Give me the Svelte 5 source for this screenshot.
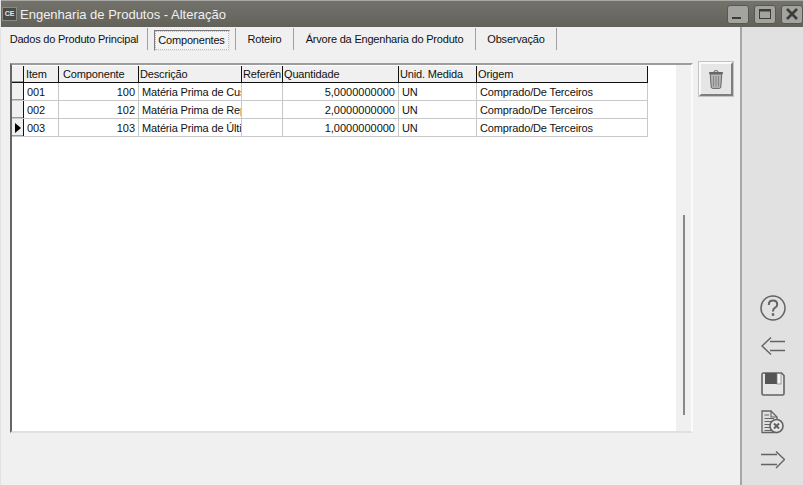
<script lang="ts">
  const tabs = [
    { label: 'Dados do Produto Principal', width: 147 },
    { label: 'Componentes', width: 88, active: true },
    { label: 'Roteiro', width: 58 },
    { label: 'Árvore da Engenharia do Produto', width: 182 },
    { label: 'Observação', width: 81 }
  ];

  const columns = [
    { title: 'Item', width: 35 },
    { title: 'Componente', width: 80, numeric: true },
    { title: 'Descrição', width: 103 },
    { title: 'Referên', width: 41 },
    { title: 'Quantidade', width: 116, numeric: true },
    { title: 'Unid. Medida', width: 78 },
    { title: 'Origem', width: 171 }
  ];

  const rows = [
    ['001', '100', 'Matéria Prima de Custo', '', '5,0000000000', 'UN', 'Comprado/De Terceiros'],
    ['002', '102', 'Matéria Prima de Reposição', '', '2,0000000000', 'UN', 'Comprado/De Terceiros'],
    ['003', '103', 'Matéria Prima de Última', '', '1,0000000000', 'UN', 'Comprado/De Terceiros']
  ];
</script>

<div class="window">
  <header class="titlebar">
    <span class="app-icon">CE</span>
    <span class="title">Engenharia de Produtos - Alteração</span>
    <div class="win-buttons">
      <button class="win-btn" aria-label="Minimizar">
        <svg width="14" height="12" viewBox="0 0 14 12"><rect x="1" y="9" width="9" height="2" fill="#3c3c38" /></svg>
      </button>
      <button class="win-btn" aria-label="Maximizar">
        <svg width="14" height="12" viewBox="0 0 14 12"><rect x="1.5" y="1.5" width="11" height="9" fill="none" stroke="#3c3c38" stroke-width="1" /><rect x="1" y="1" width="12" height="2.5" fill="#3c3c38" /></svg>
      </button>
      <button class="win-btn" aria-label="Fechar">
        <svg width="14" height="12" viewBox="0 0 14 12"><path d="M2 1 L12 11 M12 1 L2 11" stroke="#3c3c38" stroke-width="2.6" /></svg>
      </button>
    </div>
  </header>

  <div class="body">
    <main class="main">
      <nav class="tabs">
        {#each tabs as tab}
          <div class="tab" class:active={tab.active} style="width: {tab.width}px">
            <span class="tab-label">{tab.label}</span>
          </div>
        {/each}
      </nav>

      <div class="content">
        <div class="grid-frame">
          <div class="grid-area">
            <div class="grid">
              <div class="row head">
                <div class="indicator"></div>
                {#each columns as col}
                  <div class="cell" style="width: {col.width}px">{col.title}</div>
                {/each}
              </div>
              {#each rows as row, r}
                <div class="row">
                  <div class="indicator">
                    {#if r === rows.length - 1}<span class="pointer"></span>{/if}
                  </div>
                  {#each row as value, c}
                    <div class="cell" class:num={columns[c].numeric} style="width: {columns[c].width}px">{value}</div>
                  {/each}
                </div>
              {/each}
            </div>
          </div>
          <div class="scroll-track"><div class="scroll-thumb"></div></div>
        </div>

        <button class="trash" aria-label="Excluir">
          <svg width="14" height="19" viewBox="0 0 14 19" fill="none">
            <path d="M5 2 Q5 0.7 6 0.7 H8 Q9 0.7 9 2" stroke="#666" stroke-width="1" />
            <rect x="0" y="2" width="14" height="2" rx="0.7" fill="#666" />
            <path d="M1.2 4 L2.2 17 Q2.4 18.4 3.5 18.4 H10.5 Q11.6 18.4 11.8 17 L12.8 4 Z" fill="#b4b4b4" stroke="#666" stroke-width="1" />
            <path d="M4.5 6 V16.5 M7 6 V16.5 M9.5 6 V16.5" stroke="#858585" stroke-width="1" />
          </svg>
        </button>
      </div>
    </main>

    <aside class="sidebar">
      <div class="slot">
        <svg width="26" height="26" viewBox="0 0 26 26" fill="none" stroke="#636363">
          <circle cx="13" cy="13" r="12" stroke-width="1.5" />
          <path d="M8.8 10 Q8.8 5.6 13 5.6 Q17.2 5.6 17.2 9.4 Q17.2 11.6 14.8 12.8 Q13 13.8 13 16.4" stroke-width="2" />
          <rect x="11.8" y="18.2" width="2.4" height="2.6" fill="#636363" stroke="none" />
        </svg>
      </div>
      <div class="slot">
        <svg width="24" height="18" viewBox="0 0 24 18" fill="none" stroke="#636363" stroke-width="1.4">
          <path d="M10 0.5 L1 9 L10 17.5 M9 4.5 H24 M9 13.5 H24" />
        </svg>
      </div>
      <div class="slot">
        <svg width="24" height="24" viewBox="0 0 24 24" fill="none">
          <path d="M1 2.5 Q1 1 2.5 1 H20.5 L23 3.5 V21.5 Q23 23 21.5 23 H2.5 Q1 23 1 21.5 Z" fill="#e6e6e6" stroke="#636363" stroke-width="1.6" />
          <rect x="4" y="1" width="12" height="11" fill="#555" />
          <rect x="16" y="1.5" width="4" height="10.5" fill="#f6f6f6" stroke="#777" stroke-width="0.7" />
        </svg>
      </div>
      <div class="slot">
        <svg width="23" height="24" viewBox="0 0 23 24" fill="none" stroke="#636363">
          <path d="M1 1 H10 L16 7 V22.5 H1 Z" stroke-width="1.3" fill="#dedede" />
          <path d="M10 1 V7 H16" stroke-width="1.1" />
          <path d="M3.5 5 H8 M3.5 8.5 H13 M3.5 11.5 H11 M3.5 14.5 H9 M3.5 17.5 H9 M3.5 20.5 H12" stroke-width="1.2" />
          <circle cx="15.5" cy="16" r="6.5" fill="#e8e8e8" stroke-width="1.6" />
          <path d="M13 13.5 L18 18.5 M18 13.5 L13 18.5" stroke-width="2" />
        </svg>
      </div>
      <div class="slot">
        <svg width="24" height="18" viewBox="0 0 24 18" fill="none" stroke="#636363" stroke-width="1.4">
          <path d="M15 0.5 L23.5 8.5 L15 17 M0 3.5 H16 M0 13.5 H16" />
        </svg>
      </div>
    </aside>
  </div>
</div>

<style>
  :global(body) {
    margin: 0;
    background: #f0f0f0;
    font-family: "Liberation Sans", sans-serif;
  }

  .window {
    width: 803px;
    height: 485px;
    display: flex;
    flex-direction: column;
    overflow: hidden;
    box-sizing: border-box;
    border-left: 1px solid #e2e2e2;
  }

  .titlebar {
    height: 27px;
    flex: none;
    display: flex;
    align-items: center;
    box-sizing: border-box;
    border-top: 1px solid #a8a8a4;
    background: linear-gradient(#73736b, #62625b);
    margin-left: -1px;
  }

  .app-icon {
    width: 13px;
    height: 12px;
    margin-left: 2px;
    background: #4a4a46;
    border: 1px solid #8a8a84;
    color: #e4e4e4;
    font: bold 7px/12px "Liberation Sans", sans-serif;
    text-align: center;
  }

  .title {
    margin-left: 3px;
    color: #f0f0f0;
    font: 13px "Liberation Sans", sans-serif;
  }

  .win-buttons {
    margin-left: auto;
    display: flex;
    gap: 5px;
  }

  .win-btn {
    width: 22px;
    height: 19px;
    padding: 0;
    display: flex;
    align-items: center;
    justify-content: center;
    background: #a3a39f;
    border: 1px solid #585853;
    border-radius: 3px;
  }

  .body {
    flex: 1;
    display: flex;
    min-height: 0;
  }

  .main {
    width: 741px;
    flex: none;
    box-sizing: border-box;
    border-right: 2px solid #a6a6a6;
    display: flex;
    flex-direction: column;
  }

  .tabs {
    height: 22px;
    margin-top: 1px;
    display: flex;
  }

  .tab {
    box-sizing: border-box;
    height: 22px;
    display: flex;
    align-items: center;
    justify-content: center;
    border-right: 1px solid #a0a0a0;
    font: 11px "Liberation Sans", sans-serif;
    letter-spacing: -0.2px;
    color: #111;
  }

  .tab-label {
    white-space: nowrap;
  }

  .tab.active .tab-label {
    display: block;
    box-sizing: border-box;
    width: 76px;
    height: 21px;
    line-height: 18px;
    margin-top: 2px;
    text-align: center;
    background: #f4f4f4;
    border: 1px solid;
    border-color: #7a7a7a #e8e8e8 #e8e8e8 #7a7a7a;
    outline: 1px dotted #bbb;
    outline-offset: -2px;
  }

  .content {
    flex: 1;
    display: flex;
    align-items: flex-start;
    padding: 13px 0 0 9px;
  }

  .grid-frame {
    width: 683px;
    height: 370px;
    box-sizing: border-box;
    display: flex;
    border-top: 2px solid #9c9c9c;
    border-left: 2px solid #666;
    border-bottom: 2px solid #e0e0e0;
    border-right: 2px solid #fafafa;
  }

  .grid-area {
    width: 664px;
    background: #fff;
    flex: none;
  }

  .row {
    height: 18px;
    display: flex;
    box-sizing: border-box;
    border-bottom: 1px solid #c8c8c8;
    width: 636px;
  }

  .row.head {
    height: 18px;
    background: #f0f0f0;
    border-bottom: 1px solid #111;
    border-top: 1px solid #fff;
  }

  .indicator {
    width: 12px;
    flex: none;
    box-sizing: border-box;
    background: #f0f0f0;
    border-right: 1px solid #111;
    box-shadow: inset 0 -1px 0 #9a9a9a;
    display: flex;
    align-items: center;
    justify-content: center;
  }

  .pointer {
    width: 0;
    height: 0;
    border-left: 6px solid #000;
    border-top: 5px solid transparent;
    border-bottom: 5px solid transparent;
  }

  .cell {
    flex: none;
    box-sizing: border-box;
    padding: 0 3px;
    overflow: hidden;
    white-space: nowrap;
    font: 11px/18px "Liberation Sans", sans-serif;
    letter-spacing: -0.15px;
    color: #111;
    border-right: 1px solid #c8c8c8;
  }

  .cell.num {
    text-align: right;
    letter-spacing: 0;
  }

  .head .cell {
    padding: 0 1px;
    line-height: 16px;
    border-right: 1px solid #111;
  }

  .head .cell:nth-child(2) {
    padding-left: 2px;
  }

  .head .cell:nth-child(3) {
    padding-left: 4px;
  }

  .scroll-track {
    flex: 1;
    position: relative;
  }

  .scroll-thumb {
    position: absolute;
    left: 7px;
    top: 150px;
    width: 2px;
    height: 200px;
    background: #888;
  }

  .trash {
    margin: -1px 0 0 6px;
    width: 34px;
    height: 34px;
    padding: 0;
    box-sizing: border-box;
    display: flex;
    align-items: center;
    justify-content: center;
    background: #e6e6e6;
    border: 2px solid;
    border-color: #fafafa #7e7e7e #7e7e7e #fafafa;
    box-shadow: 0 0 0 1px #c4c4c4;
  }

  .sidebar {
    flex: 1;
    background: #e1e1e1;
    display: flex;
    flex-direction: column;
    justify-content: flex-end;
    padding: 0 0 6px;
  }

  .slot {
    height: 38px;
    display: flex;
    align-items: center;
    justify-content: center;
  }
</style>
